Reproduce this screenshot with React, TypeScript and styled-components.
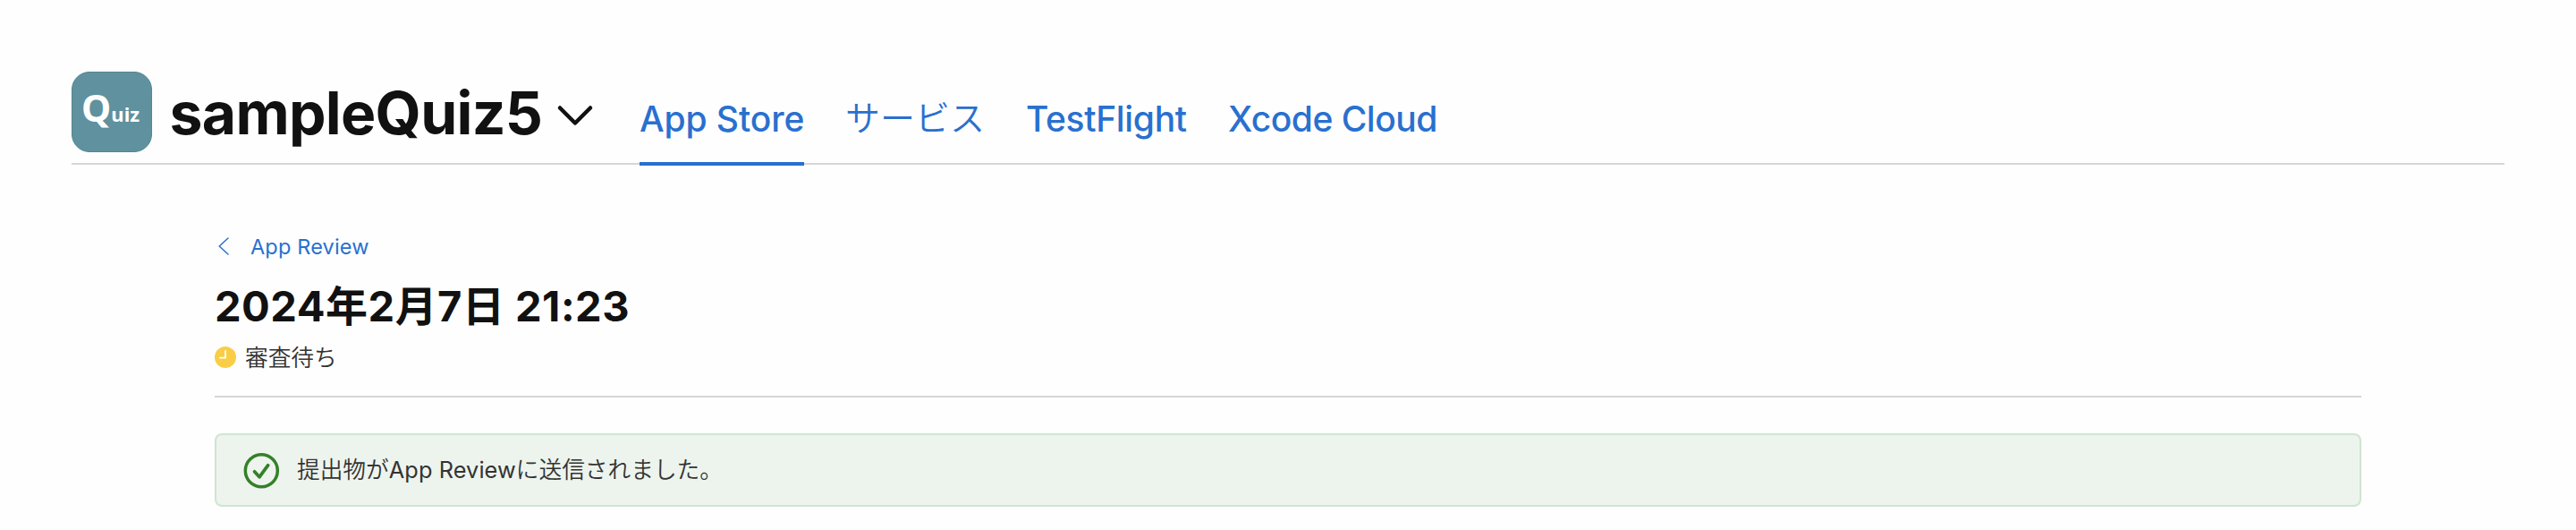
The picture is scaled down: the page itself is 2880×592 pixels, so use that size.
import React from "react";
import styled, { createGlobalStyle } from "styled-components";

const GlobalStyle = createGlobalStyle`
  * { box-sizing: border-box; }
  body {
    margin: 0;
    background: #fefefe;
    color: #111;
    font-family: Inter, "Noto Sans CJK JP", sans-serif;
    white-space: nowrap;
  }
  svg { display: block; flex: none; }
`;

const Page = styled.div`
  height: 592px;
  padding: 80px 80px 0;
`;

const Header = styled.header`
  display: flex;
  height: 104px;
  border-bottom: 2px solid #d6d6d6;
`;

const AppIcon = styled.div`
  display: flex;
  align-items: baseline;
  flex: none;
  width: 90px;
  height: 90px;
  padding-left: 10px;
  border-radius: 20px;
  border: 1px solid #558694;
  background: #5f919e;
  color: #fff;
  font-family: "Noto Sans", sans-serif;
  font-weight: 700;
  line-height: 78px;
`;

const IconInitial = styled.span`
  font-size: 42px;
`;

const IconRest = styled.span`
  font-size: 22px;
  letter-spacing: 0.1px;
`;

const AppName = styled.h1`
  width: 433px;
  margin: 0;
  padding-left: 19.5px;
  font-size: 66px;
  font-weight: 700;
  line-height: 92px;
  letter-spacing: -0.7px;
`;

const MenuChevron = styled.svg`
  margin: 36px 0 0 19px;
`;

const Tabs = styled.nav`
  display: flex;
  gap: 46px;
  margin-left: 51px;
`;

const Tab = styled.a<{ $active?: boolean; $width: number; $spacing?: number; $light?: boolean }>`
  width: ${(p) => p.$width}px;
  height: 105px;
  padding-top: ${(p) => (p.$light ? 28 : 29)}px;
  border-bottom: 4px solid ${(p) => (p.$active ? "#2970cf" : "transparent")};
  color: #2970cf;
  font-size: 39px;
  font-weight: ${(p) => (p.$light ? 350 : 500)};
  line-height: 48px;
  letter-spacing: ${(p) => p.$spacing ?? 0}px;
`;

const Content = styled.main`
  padding: 0 160px;
`;

const BackLink = styled.a`
  display: flex;
  align-items: center;
  gap: 23px;
  height: 40px;
  margin-top: 71px;
  padding-left: 4px;
  color: #2970cf;
  font-size: 23.5px;
  letter-spacing: 0.15px;
`;

const Title = styled.h2`
  margin: 17px 0 0;
  font-size: 47px;
  font-weight: 700;
  line-height: 60px;
  letter-spacing: 0.5px;
`;

const Status = styled.div`
  display: flex;
  align-items: center;
  gap: 10px;
  height: 72px;
  padding-bottom: 16px;
  border-bottom: 2px solid #d6d6d6;
  color: #333;
  font-size: 25.7px;
  font-weight: 350;
`;

const StatusText = styled.span`
  padding-bottom: 3px;
`;

const Notice = styled.section`
  display: flex;
  align-items: center;
  gap: 20px;
  height: 82px;
  margin-top: 40px;
  padding: 2px 0 0 30px;
  border: 2px solid #cfe5d0;
  border-radius: 8px;
  background: #edf4ed;
  color: #333;
`;

const NoticeText = styled.p`
  margin: 0;
  padding-bottom: 7px;
  font-size: 25.7px;
  font-weight: 350;
`;

const Latin = styled.span`
  font-size: 25.3px;
  font-weight: 400;
  letter-spacing: 0.1px;
`;

export default function App() {
  return (
    <>
      <GlobalStyle />
      <Page>
        <Header>
          <AppIcon>
            <IconInitial>Q</IconInitial>
            <IconRest>uiz</IconRest>
          </AppIcon>
          <AppName>sampleQuiz5</AppName>
          <MenuChevron width="42" height="28" viewBox="0 0 42 28" fill="none" stroke="#111" strokeWidth="4.5" strokeLinecap="round" strokeLinejoin="round">
            <path d="M4 4.5 L21 21.5 L38 4.5" />
          </MenuChevron>
          <Tabs>
            <Tab $active $width={184} $spacing={-0.1}>App Store</Tab>
            <Tab $width={156} $light>サービス</Tab>
            <Tab $width={180} $spacing={-0.35}>TestFlight</Tab>
            <Tab $width={233} $spacing={-0.5}>Xcode Cloud</Tab>
          </Tabs>
        </Header>
        <Content>
          <BackLink>
            <svg width="13" height="20" viewBox="0 0 13 20" fill="none" stroke="#2970cf" strokeWidth="1.5" strokeLinecap="round" strokeLinejoin="round">
              <path d="M11 1 L1.2 10 L11 19" />
            </svg>
            App Review
          </BackLink>
          <Title>2024年2月7日 21:23</Title>
          <Status>
            <svg width="24" height="24" viewBox="0 0 24 24" fill="none">
              <circle cx="12" cy="12" r="12" fill="#f9ce46" />
              <path d="M12 5 V12.7 H6" stroke="#fff" strokeWidth="1.8" strokeLinecap="round" strokeLinejoin="round" />
            </svg>
            <StatusText>審査待ち</StatusText>
          </Status>
          <Notice>
            <svg width="40" height="40" viewBox="0 0 40 40" fill="none" stroke="#34802a" strokeLinecap="round" strokeLinejoin="round">
              <circle cx="20.3" cy="19.8" r="18" strokeWidth="3.5" />
              <path d="M12.5 20.8 L18 26.8 L27.7 13.7" strokeWidth="3.7" />
            </svg>
            <NoticeText>
              提出物が<Latin>App Review</Latin>に送信されました。
            </NoticeText>
          </Notice>
        </Content>
      </Page>
    </>
  );
}
